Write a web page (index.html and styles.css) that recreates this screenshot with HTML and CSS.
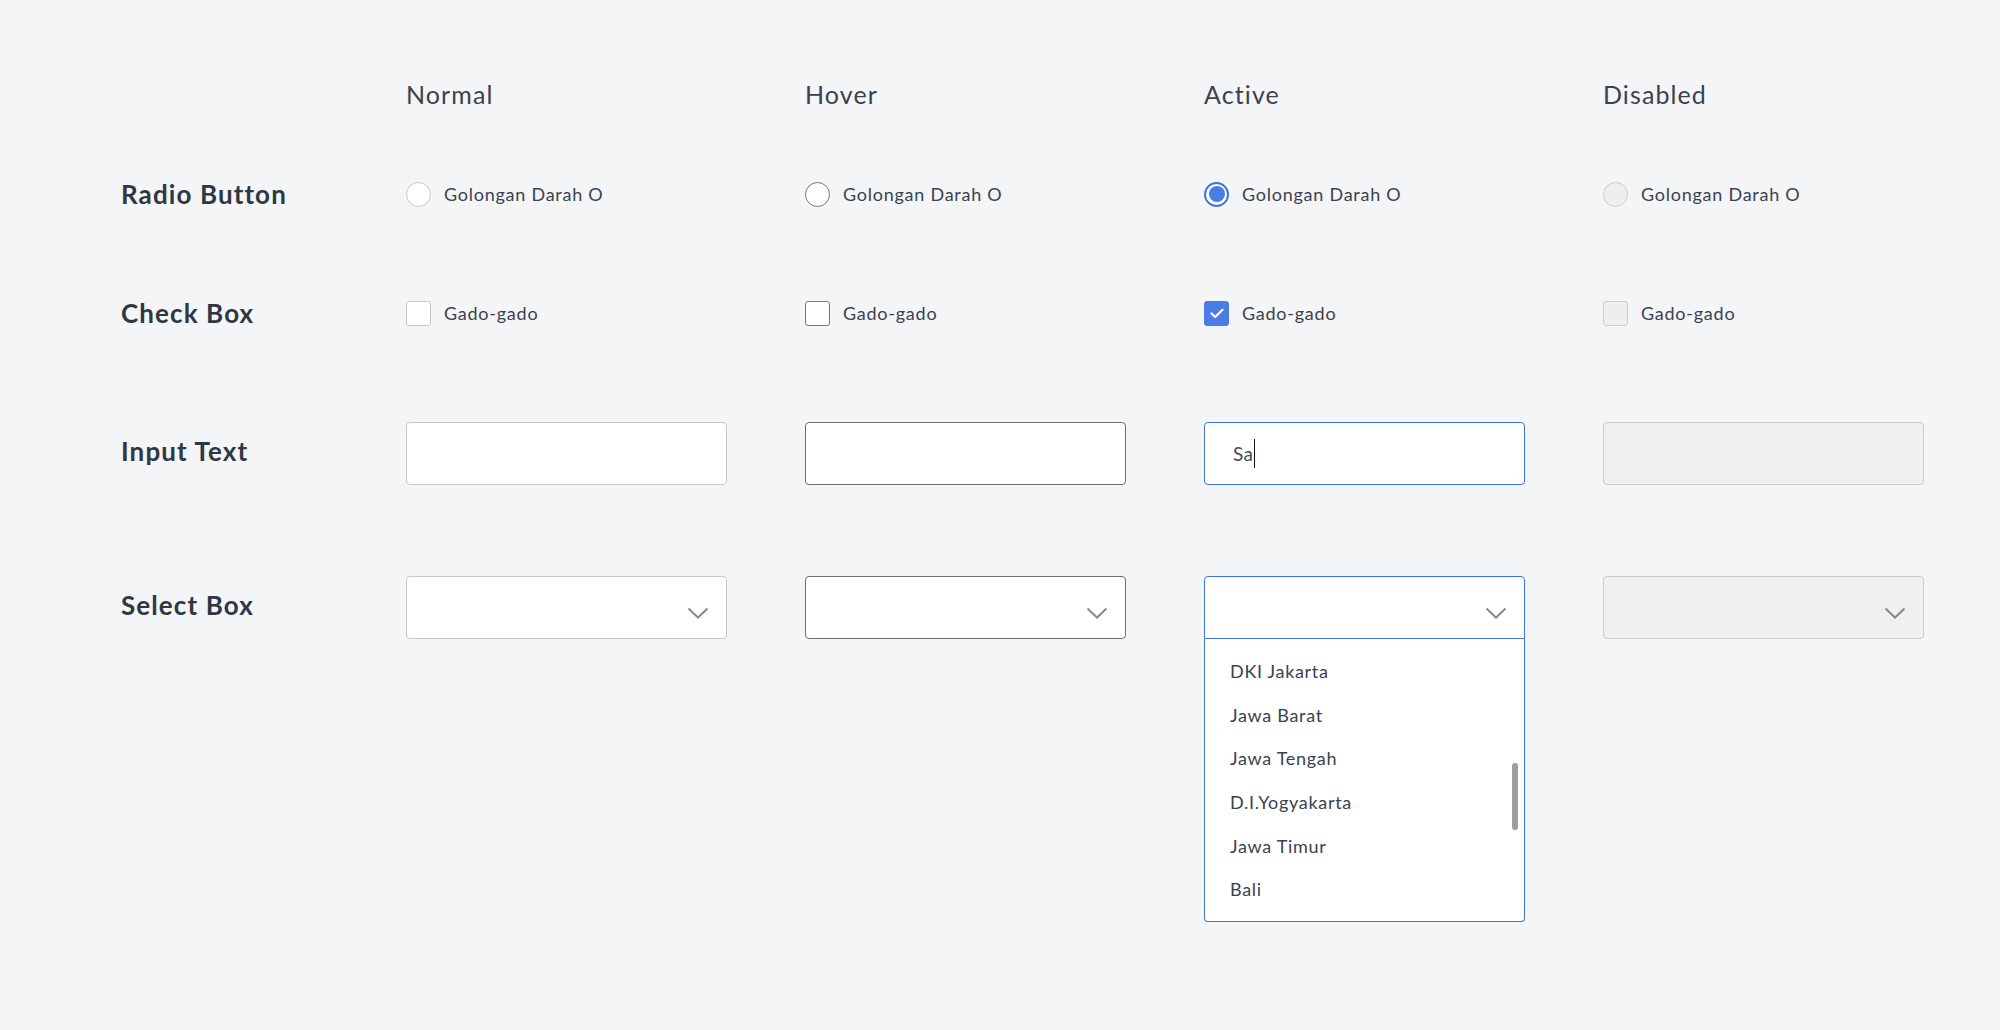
FILE: index.html
```html
<!DOCTYPE html>
<html lang="id">
<head>
<meta charset="utf-8">
<title>Form States</title>
<link rel="stylesheet" href="styles.css">
</head>
<body>
<div class="page">
  <div class="row row-head">
    <div></div>
    <div class="col-title">Normal</div>
    <div class="col-title">Hover</div>
    <div class="col-title">Active</div>
    <div class="col-title">Disabled</div>
  </div>

  <div class="row row-radio">
    <div class="row-label">Radio Button</div>
    <div class="opt"><span class="radio"></span><span class="opt-text">Golongan Darah O</span></div>
    <div class="opt"><span class="radio radio-hover"></span><span class="opt-text">Golongan Darah O</span></div>
    <div class="opt"><span class="radio radio-active"><span class="radio-dot"></span></span><span class="opt-text">Golongan Darah O</span></div>
    <div class="opt"><span class="radio radio-disabled"></span><span class="opt-text">Golongan Darah O</span></div>
  </div>

  <div class="row row-check">
    <div class="row-label">Check Box</div>
    <div class="opt"><span class="check"></span><span class="opt-text">Gado-gado</span></div>
    <div class="opt"><span class="check check-hover"></span><span class="opt-text">Gado-gado</span></div>
    <div class="opt"><span class="check check-active"><svg width="14" height="11" viewBox="0 0 14 11"><polyline points="1.5,5.5 5.2,9 12.5,1.8" fill="none" stroke="#fff" stroke-width="2.2" stroke-linecap="round" stroke-linejoin="round"/></svg></span><span class="opt-text">Gado-gado</span></div>
    <div class="opt"><span class="check check-disabled"></span><span class="opt-text">Gado-gado</span></div>
  </div>

  <div class="row row-input">
    <div class="row-label box-label">Input Text</div>
    <div class="field"></div>
    <div class="field field-hover"></div>
    <div class="field field-active"><span class="field-text">Sa</span><span class="caret"></span></div>
    <div class="field field-disabled"></div>
  </div>

  <div class="row row-select">
    <div class="row-label box-label">Select Box</div>
    <div class="select-wrap">
      <div class="field select"><svg class="chev" width="22" height="12" viewBox="0 0 22 12"><polyline points="1.5,1.5 11,10.5 20.5,1.5" fill="none" stroke="#8a8a8a" stroke-width="2"/></svg></div>
    </div>
    <div class="select-wrap">
      <div class="field field-hover select"><svg class="chev" width="22" height="12" viewBox="0 0 22 12"><polyline points="1.5,1.5 11,10.5 20.5,1.5" fill="none" stroke="#8a8a8a" stroke-width="2"/></svg></div>
    </div>
    <div class="select-wrap">
      <div class="field field-active select select-open"><svg class="chev" width="22" height="12" viewBox="0 0 22 12"><polyline points="1.5,1.5 11,10.5 20.5,1.5" fill="none" stroke="#8a8a8a" stroke-width="2"/></svg></div>
      <div class="dropdown">
        <div class="dd-item">DKI Jakarta</div>
        <div class="dd-item">Jawa Barat</div>
        <div class="dd-item">Jawa Tengah</div>
        <div class="dd-item">D.I.Yogyakarta</div>
        <div class="dd-item">Jawa Timur</div>
        <div class="dd-item">Bali</div>
        <span class="scroll-thumb"></span>
      </div>
    </div>
    <div class="select-wrap">
      <div class="field field-disabled select"><svg class="chev" width="22" height="12" viewBox="0 0 22 12"><polyline points="1.5,1.5 11,10.5 20.5,1.5" fill="none" stroke="#8a8a8a" stroke-width="2"/></svg></div>
    </div>
  </div>
</div>
</body>
</html>
```
FILE: styles.css
```css
* { box-sizing: border-box; }

html, body {
  margin: 0;
  padding: 0;
  background: #f4f5f7;
}

body {
  font-family: "Lato", "Noto Sans", sans-serif;
  color: #2f3744;
  width: 2000px;
  height: 1030px;
  overflow: hidden;
}

.page {
  padding: 74px 0 0 121px;
}

.row {
  display: grid;
  grid-template-columns: 207px repeat(4, 321px);
  column-gap: 78px;
  align-items: center;
}

.row-head { height: 40px; }
.row-radio { height: 40px; margin-top: 60px; }
.row-check { height: 40px; margin-top: 79px; }
.row-input { height: 63px; margin-top: 89px; }
.row-select { margin-top: 91px; align-items: start; }

.col-title {
  font-size: 25px;
  font-weight: 400;
  color: #3a4250;
  letter-spacing: 1.1px;
}

.row-label {
  font-size: 26px;
  font-weight: 700;
  color: #2f3744;
  letter-spacing: 1.1px;
}

.box-label {
  height: 63px;
  display: flex;
  align-items: center;
  padding-bottom: 5px;
}

.opt {
  display: flex;
  align-items: center;
  gap: 13px;
}

.opt-text {
  font-size: 18px;
  color: #3a4250;
  letter-spacing: 0.75px;
}

.radio {
  width: 25px;
  height: 25px;
  border-radius: 50%;
  border: 1px solid #c9c9c9;
  background: #fff;
  display: flex;
  align-items: center;
  justify-content: center;
  flex: none;
}

.radio-hover { border: 1.5px solid #777; }

.radio-active { border: 2px solid #3f72e4; }

.radio-dot {
  width: 16px;
  height: 16px;
  border-radius: 50%;
  background: #4a7ce6;
}

.radio-disabled {
  background: #eeeeee;
  border-color: #cfcfcf;
}

.check {
  width: 25px;
  height: 25px;
  border-radius: 3px;
  border: 1px solid #c9c9c9;
  background: #fff;
  display: flex;
  align-items: center;
  justify-content: center;
  flex: none;
}

.check-hover { border: 1.5px solid #777; }

.check-active {
  background: #4a7ce6;
  border-color: #4a7ce6;
}

.check-disabled {
  background: #eeeeee;
  border-color: #cfcfcf;
}

.field {
  height: 63px;
  border: 1px solid #c8c8c8;
  border-radius: 4px;
  background: #fff;
  display: flex;
  align-items: center;
  padding-left: 28px;
}

.field-hover { border-color: #6e6e6e; }

.field-active { border: 1.5px solid #3f72e4; }

.field-disabled {
  background: #f0f0f0;
  border-color: #cbcbcb;
}

.field-text {
  font-size: 19px;
  color: #444b57;
  letter-spacing: 0.3px;
}

.caret {
  width: 1px;
  height: 29px;
  background: #111;
  margin-left: 1px;
}

.select {
  position: relative;
  justify-content: flex-end;
  padding: 11px 17px 0 0;
}

.select-open {
  border-bottom-left-radius: 0;
  border-bottom-right-radius: 0;
}

.chev { display: block; }

.dropdown {
  position: relative;
  border: 1.5px solid #3f72e4;
  border-top: none;
  border-radius: 0 0 4px 4px;
  background: #fff;
  padding: 10px 0 11px 25px;
  height: 283px;
}

.dd-item {
  height: 43.7px;
  display: flex;
  align-items: center;
  font-size: 18px;
  color: #3a4250;
  letter-spacing: 0.7px;
}

.scroll-thumb {
  position: absolute;
  right: 6px;
  top: 124px;
  width: 6px;
  height: 67px;
  border-radius: 3px;
  background: #9e9e9e;
}
```
